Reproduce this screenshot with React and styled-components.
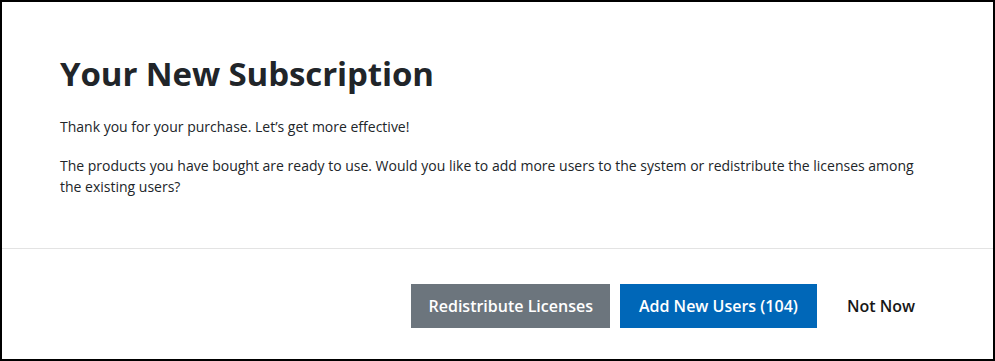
import React from "react"
import styled, { createGlobalStyle } from "styled-components"

const GlobalStyle = createGlobalStyle`
  html, body {
    margin: 0;
    padding: 0;
    background: #ffffff;
  }
  body {
    font-family: "Open Sans", "Noto Sans", "Liberation Sans", sans-serif;
    color: #212529;
  }
  * {
    box-sizing: border-box;
  }
`

const Dialog = styled.div`
  width: 995px;
  height: 361px;
  border: 2px solid #000000;
  display: flex;
  flex-direction: column;
  background: #ffffff;
`

const Body = styled.div`
  padding: 52px 58px 33px 58px;
  border-bottom: 1px solid #e3e3e3;
`

const Title = styled.h2`
  margin: 0 0 22px 0;
  font-size: 33px;
  font-weight: 700;
  line-height: 40px;
  letter-spacing: -0.1px;
`

const Text = styled.p`
  margin: 0 0 18px 0;
  font-size: 14px;
  line-height: 21px;
  max-width: 875px;
`

const Footer = styled.div`
  flex: 1;
  display: flex;
  justify-content: flex-end;
  align-items: flex-start;
  gap: 10px;
  padding: 35px 62px 0 0;
`

const pads = {
  primary: "0 19px",
  secondary: "0 17px",
  link: "0 16px 0 20px",
}

const fills = {
  primary: "#0067b8",
  secondary: "#6c757d",
  link: "transparent",
}

const Button = styled.button`
  height: 44px;
  padding: ${p => pads[p.$variant]};
  border: none;
  border-radius: 0;
  font-family: inherit;
  font-size: 16px;
  font-weight: 600;
  cursor: pointer;
  color: ${p => (p.$variant === "link" ? "#171717" : "#ffffff")};
  background: ${p => fills[p.$variant]};
`

export default function App() {
  return (
    <>
      <GlobalStyle />
      <Dialog>
        <Body>
          <Title>Your New Subscription</Title>
          <Text>Thank you for your purchase. Let’s get more effective!</Text>
          <Text>
            The products you have bought are ready to use. Would you like to add
            more users to the system or redistribute the licenses among the
            existing users?
          </Text>
        </Body>
        <Footer>
          <Button $variant="secondary">Redistribute Licenses</Button>
          <Button $variant="primary">Add New Users (104)</Button>
          <Button $variant="link">Not Now</Button>
        </Footer>
      </Dialog>
    </>
  )
}
